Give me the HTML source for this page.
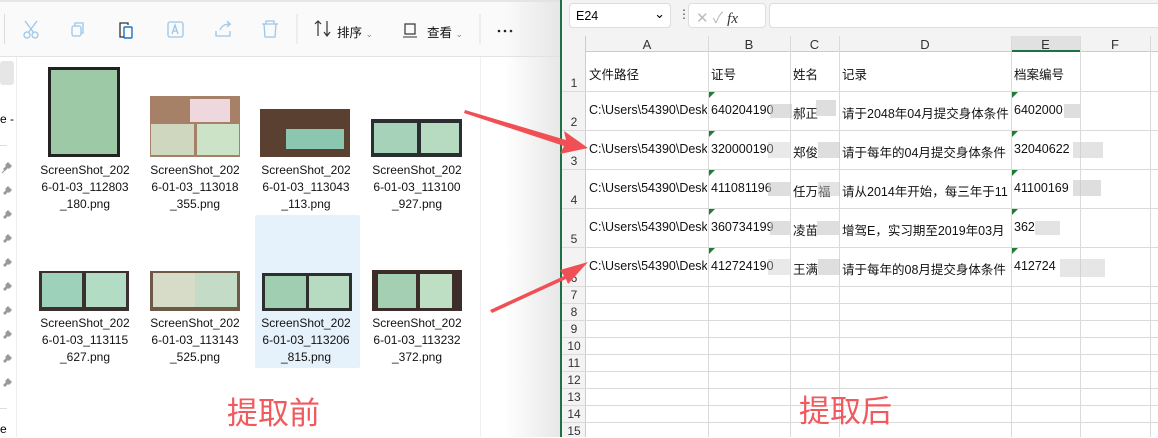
<!DOCTYPE html>
<html><head><meta charset="utf-8"><style>
*{margin:0;padding:0;box-sizing:border-box}
body{width:1158px;height:437px;overflow:hidden;background:#fff;position:relative;font-family:"Liberation Sans","Noto Sans CJK SC",sans-serif}
.a{position:absolute}
.tb{left:0;top:0;width:560px;height:57px;background:#fafafa;border-bottom:1px solid #e3e3e3}
.fn{font-size:12px;color:#111;text-align:center;line-height:17px;width:100px}
.rh{position:absolute;left:562px;width:24px;font-size:12px;color:#333;text-align:center}
.cell{position:absolute;font-size:12.5px;color:#111;white-space:nowrap;overflow:hidden}
.blur{position:absolute;background:#c8c8c8;opacity:.6}
.tri{position:absolute;width:0;height:0;border-top:6px solid #1e7d32;border-right:6px solid transparent}
.pn{position:absolute;left:1px;width:10px;height:10px}
</style></head><body>
<div class="a tb"></div>
<div class="a" style="left:0;top:0;width:560px;height:2px;background:#e6e6e6"></div>
<div class="a" style="left:4px;top:14px;width:1px;height:30px;background:#ddd"></div>
<svg class="a" style="left:0;top:0" width="560" height="57">
<g fill="none" stroke="#9cc7ea" stroke-width="1.3">
<circle cx="27" cy="35" r="3"/><circle cx="35" cy="35" r="3"/><path d="M25 21l9 12M37 21l-9 12"/>
<rect x="72" y="26" width="9" height="10" rx="2"/><path d="M75 26v-3h8v10h-2"/>
<rect x="168" y="22" width="15" height="15" rx="2"/><path d="M172 34l3-9 3 9M173 31h4"/>
<path d="M216 31v5h14v-5M220 30c2-5 6-6 10-6l-3-3M230 24l-3 3"/>
<path d="M262 24h16M266 24v-3h8v3M264 24l1 13h10l1-13"/>
</g>
<rect x="124" y="27" width="8" height="11" rx="1" fill="none" stroke="#1a73c7" stroke-width="1.4"/>
<path d="M128 25v-2h-8v14h4" fill="none" stroke="#333" stroke-width="1.3"/>
<line x1="297" y1="14" x2="297" y2="44" stroke="#e0e0e0"/>
<path d="M315 24l3-3 3 3M318 21v15M324 32l3 4 3-4M327 21v15" stroke="#333" fill="none" stroke-width="1.2"/>
<rect x="405" y="24" width="10" height="10" fill="none" stroke="#333" stroke-width="1.2"/><line x1="403" y1="37" x2="417" y2="37" stroke="#333"/>
<line x1="480" y1="14" x2="480" y2="44" stroke="#e0e0e0"/>
<circle cx="499" cy="31" r="1.3" fill="#222"/><circle cx="505" cy="31" r="1.3" fill="#222"/><circle cx="511" cy="31" r="1.3" fill="#222"/>
</svg>
<div class="a" style="left:337px;top:22px;font-size:12.5px;color:#111">排序 <span style="color:#888;font-size:9px">⌄</span></div>
<div class="a" style="left:427px;top:22px;font-size:12.5px;color:#111">查看 <span style="color:#888;font-size:9px">⌄</span></div>
<div class="a" style="left:0;top:61px;width:14px;height:24px;background:#e6e6e6;border-radius:3px"></div>
<div class="a" style="left:0;top:112px;font-size:12px">e -</div>
<div class="a" style="left:0;top:145px;width:7px;height:1px;background:#ddd"></div>
<div class="a" style="left:0;top:408px;width:7px;height:1px;background:#ddd"></div>
<div class="a" style="left:0;top:422px;font-size:12px">e</div>
<div class="a" style="left:16px;top:57px;width:1px;height:380px;background:#eee"></div>
<svg class="a" style="left:0;top:160px" width="14" height="240"><g fill="#999">
<path d="M3 9l3-3-1-1 3-3 4 4-3 3-1-1-3 3z M2 12l3-3"/>
<path transform="translate(0,24)" d="M3 9l3-3-1-1 3-3 4 4-3 3-1-1-3 3z"/>
<path transform="translate(0,48)" d="M3 9l3-3-1-1 3-3 4 4-3 3-1-1-3 3z"/>
<path transform="translate(0,72)" d="M3 9l3-3-1-1 3-3 4 4-3 3-1-1-3 3z"/>
<path transform="translate(0,96)" d="M3 9l3-3-1-1 3-3 4 4-3 3-1-1-3 3z"/>
<path transform="translate(0,120)" d="M3 9l3-3-1-1 3-3 4 4-3 3-1-1-3 3z"/>
<path transform="translate(0,144)" d="M3 9l3-3-1-1 3-3 4 4-3 3-1-1-3 3z"/>
<path transform="translate(0,168)" d="M3 9l3-3-1-1 3-3 4 4-3 3-1-1-3 3z"/>
<path transform="translate(0,192)" d="M3 9l3-3-1-1 3-3 4 4-3 3-1-1-3 3z"/>
<path transform="translate(0,216)" d="M3 9l3-3-1-1 3-3 4 4-3 3-1-1-3 3z"/>
</g><g stroke="#999"><line x1="2" y1="13" x2="5" y2="10"/></g></svg>
<div class="a" style="left:255px;top:215px;width:105px;height:153px;background:#e5f1fb;border-radius:2px"></div>
<!-- thumbs row1 -->
<div class="a" style="left:48px;top:67px;width:72px;height:90px;background:#9ec9a6;border:3px solid #222"></div>
<div class="a" style="left:150px;top:96px;width:90px;height:61px;background:#a78068"></div>
<div class="a" style="left:151px;top:124px;width:43px;height:31px;background:#cfd8bf"></div><div class="a" style="left:197px;top:124px;width:42px;height:31px;background:#cde3c8"></div>
<div class="a" style="left:190px;top:99px;width:40px;height:23px;background:#eed8dd"></div>
<div class="a" style="left:260px;top:109px;width:90px;height:48px;background:#5a4030"></div>
<div class="a" style="left:286px;top:129px;width:58px;height:20px;background:#8bc6b0"></div>
<div class="a" style="left:371px;top:119px;width:91px;height:38px;background:#2b2e30"></div>
<div class="a" style="left:374px;top:123px;width:43px;height:30px;background:#a5d2b8"></div><div class="a" style="left:421px;top:123px;width:38px;height:30px;background:#b7dbc0"></div>
<!-- thumbs row2 -->
<div class="a" style="left:39px;top:271px;width:90px;height:40px;background:#3a3030"></div>
<div class="a" style="left:42px;top:273px;width:40px;height:34px;background:#9dd1ba"></div><div class="a" style="left:86px;top:273px;width:40px;height:34px;background:#b2dcc4"></div>
<div class="a" style="left:150px;top:271px;width:90px;height:40px;background:#6e5a44"></div>
<div class="a" style="left:153px;top:273px;width:42px;height:34px;background:#d6dcc8"></div><div class="a" style="left:195px;top:273px;width:42px;height:34px;background:#c4dbc8"></div>
<div class="a" style="left:262px;top:273px;width:90px;height:38px;background:#2d2e2e"></div>
<div class="a" style="left:265px;top:276px;width:41px;height:32px;background:#9fceb1"></div><div class="a" style="left:309px;top:276px;width:40px;height:32px;background:#b6dbc0"></div>
<div class="a" style="left:372px;top:270px;width:90px;height:41px;background:#3c2c2a"></div>
<div class="a" style="left:378px;top:274px;width:38px;height:34px;background:#a5cfb2"></div><div class="a" style="left:420px;top:274px;width:32px;height:34px;background:#bfdfc5"></div>
<div class="a fn" style="left:35px;top:162px">ScreenShot_202<br>6-01-03_112803<br>_180.png</div>
<div class="a fn" style="left:145px;top:162px">ScreenShot_202<br>6-01-03_113018<br>_355.png</div>
<div class="a fn" style="left:256px;top:162px">ScreenShot_202<br>6-01-03_113043<br>_113.png</div>
<div class="a fn" style="left:367px;top:162px">ScreenShot_202<br>6-01-03_113100<br>_927.png</div>
<div class="a fn" style="left:35px;top:315px">ScreenShot_202<br>6-01-03_113115<br>_627.png</div>
<div class="a fn" style="left:145px;top:315px">ScreenShot_202<br>6-01-03_113143<br>_525.png</div>
<div class="a fn" style="left:256px;top:315px">ScreenShot_202<br>6-01-03_113206<br>_815.png</div>
<div class="a fn" style="left:367px;top:315px">ScreenShot_202<br>6-01-03_113232<br>_372.png</div>
<div class="a" style="left:480px;top:57px;width:1px;height:380px;background:#f0f0f0"></div>
<div class="a" style="left:505px;top:0;width:55px;height:437px;background:linear-gradient(90deg,rgba(255,255,255,0),rgba(225,225,225,.8))"></div>
<div class="a" style="left:227px;top:388px;font-size:31px;color:#f05a5e">提取前</div>
<!-- excel -->
<div class="a" style="left:560px;top:0;width:598px;height:36px;background:#f3f3f3"></div>
<div class="a" style="left:560px;top:0;width:2px;height:437px;background:#1e7145"></div>
<div class="a" style="left:569px;top:3px;width:102px;height:25px;background:#fff;border:1px solid #ddd;border-radius:4px;font-size:12.5px;padding:5px 0 0 6px">E24<span style="position:absolute;right:5px;top:2px;font-size:13px">⌄</span></div>
<div class="a" style="left:678px;top:7px;font-size:12px;color:#444">⋮</div>
<div class="a" style="left:688px;top:3px;width:78px;height:25px;background:#fff;border:1px solid #ddd;border-radius:4px;font-size:15px;color:#bbb;padding:3px 0 0 7px">✕ ✓ <i style="color:#333;font-family:'Liberation Serif',serif">fx</i></div>
<div class="a" style="left:769px;top:3px;width:395px;height:25px;background:#fff;border:1px solid #ddd;border-radius:4px"></div>
<div class="a" style="left:562px;top:36px;width:596px;height:16px;background:#f3f3f3;border-bottom:1px solid #ccc"></div>
<div class="a" style="left:562px;top:36px;width:24px;height:401px;background:#f3f3f3;border-right:1px solid #ccc"></div>
<div class="a" style="left:1011px;top:36px;width:69px;height:16px;background:#e1e1e1;border-bottom:2px solid #1e7145"></div>
<svg class="a" style="left:562px;top:36px" width="596" height="401">
<g stroke="#dadada" stroke-width="1">
<line x1="146.5" y1="0" x2="146.5" y2="401"/><line x1="228.5" y1="0" x2="228.5" y2="401"/><line x1="277.5" y1="0" x2="277.5" y2="401"/><line x1="449.5" y1="0" x2="449.5" y2="401"/><line x1="518.5" y1="0" x2="518.5" y2="401"/><line x1="588.5" y1="0" x2="588.5" y2="401"/>
<line x1="0" y1="55.5" x2="596" y2="55.5"/><line x1="0" y1="94.5" x2="596" y2="94.5"/><line x1="0" y1="133.5" x2="596" y2="133.5"/><line x1="0" y1="172.5" x2="596" y2="172.5"/><line x1="0" y1="211.5" x2="596" y2="211.5"/><line x1="0" y1="250.5" x2="596" y2="250.5"/>
<line x1="0" y1="267.5" x2="596" y2="267.5"/><line x1="0" y1="284.5" x2="596" y2="284.5"/><line x1="0" y1="301.5" x2="596" y2="301.5"/><line x1="0" y1="318.5" x2="596" y2="318.5"/><line x1="0" y1="335.5" x2="596" y2="335.5"/><line x1="0" y1="352.5" x2="596" y2="352.5"/><line x1="0" y1="369.5" x2="596" y2="369.5"/><line x1="0" y1="386.5" x2="596" y2="386.5"/>
</g></svg>
<div class="a" style="top:37px;left:586px;width:122px;text-align:center;font-size:13px;color:#333">A</div>
<div class="a" style="top:37px;left:708px;width:82px;text-align:center;font-size:13px;color:#333">B</div>
<div class="a" style="top:37px;left:790px;width:49px;text-align:center;font-size:13px;color:#333">C</div>
<div class="a" style="top:37px;left:839px;width:172px;text-align:center;font-size:13px;color:#333">D</div>
<div class="a" style="top:37px;left:1011px;width:69px;text-align:center;font-size:13px;color:#333">E</div>
<div class="a" style="top:37px;left:1080px;width:70px;text-align:center;font-size:13px;color:#333">F</div>
<div class="rh" style="top:76px">1</div><div class="rh" style="top:115px">2</div><div class="rh" style="top:154px">3</div><div class="rh" style="top:193px">4</div><div class="rh" style="top:232px">5</div><div class="rh" style="top:271px">6</div>
<div class="rh" style="top:288px">7</div><div class="rh" style="top:305px">8</div><div class="rh" style="top:322px">9</div><div class="rh" style="top:339px">10</div><div class="rh" style="top:356px">11</div><div class="rh" style="top:373px">12</div><div class="rh" style="top:390px">13</div><div class="rh" style="top:407px">14</div><div class="rh" style="top:424px">15</div>
<div class="cell" style="left:589px;top:64px">文件路径</div><div class="cell" style="left:711px;top:64px">证号</div><div class="cell" style="left:793px;top:64px">姓名</div><div class="cell" style="left:842px;top:64px">记录</div><div class="cell" style="left:1014px;top:64px">档案编号</div>
<div class="cell" style="left:589px;top:103px;width:118px">C:\Users\54390\Desktop</div><div class="cell" style="left:711px;top:103px;width:78px">640204190</div><div class="cell" style="left:793px;top:103px;width:45px">郝正</div><div class="cell" style="left:842px;top:103px;width:168px">请于2048年04月提交身体条件</div><div class="cell" style="left:1014px;top:103px;width:50px">6402000</div>
<div class="cell" style="left:589px;top:142px;width:118px">C:\Users\54390\Desktop</div><div class="cell" style="left:711px;top:142px;width:78px">320000190</div><div class="cell" style="left:793px;top:142px;width:45px">郑俊</div><div class="cell" style="left:842px;top:142px;width:168px">请于每年的04月提交身体条件</div><div class="cell" style="left:1014px;top:142px;width:60px">32040622</div>
<div class="cell" style="left:589px;top:181px;width:118px">C:\Users\54390\Desktop</div><div class="cell" style="left:711px;top:181px;width:78px">411081196</div><div class="cell" style="left:793px;top:181px;width:45px">任万福</div><div class="cell" style="left:842px;top:181px;width:168px">请从2014年开始，每三年于11</div><div class="cell" style="left:1014px;top:181px;width:60px">41100169</div>
<div class="cell" style="left:589px;top:220px;width:118px">C:\Users\54390\Desktop</div><div class="cell" style="left:711px;top:220px;width:78px">360734199</div><div class="cell" style="left:793px;top:220px;width:45px">凌苗</div><div class="cell" style="left:842px;top:220px;width:168px">增驾E，实习期至2019年03月</div><div class="cell" style="left:1014px;top:220px;width:30px">362</div>
<div class="cell" style="left:589px;top:259px;width:118px">C:\Users\54390\Desktop</div><div class="cell" style="left:711px;top:259px;width:78px">412724190</div><div class="cell" style="left:793px;top:259px;width:45px">王满</div><div class="cell" style="left:842px;top:259px;width:168px">请于每年的08月提交身体条件</div><div class="cell" style="left:1014px;top:259px;width:50px">412724</div>
<div class="blur" style="left:770px;top:104px;width:22px;height:14px"></div><div class="blur" style="left:816px;top:100px;width:20px;height:16px"></div><div class="blur" style="left:1064px;top:104px;width:16px;height:14px"></div>
<div class="blur" style="left:768px;top:142px;width:22px;height:16px;opacity:.4"></div><div class="blur" style="left:818px;top:142px;width:22px;height:16px"></div><div class="blur" style="left:1073px;top:142px;width:30px;height:16px;opacity:.5"></div>
<div class="blur" style="left:768px;top:182px;width:22px;height:14px"></div><div class="blur" style="left:818px;top:182px;width:22px;height:14px;opacity:.5"></div><div class="blur" style="left:1073px;top:180px;width:28px;height:16px;opacity:.6"></div>
<div class="blur" style="left:770px;top:221px;width:20px;height:14px"></div><div class="blur" style="left:817px;top:221px;width:22px;height:14px"></div><div class="blur" style="left:1035px;top:221px;width:25px;height:14px;opacity:.5"></div>
<div class="blur" style="left:768px;top:259px;width:22px;height:16px;opacity:.4"></div><div class="blur" style="left:818px;top:259px;width:22px;height:16px"></div><div class="blur" style="left:1060px;top:259px;width:45px;height:18px;opacity:.45"></div>
<div class="tri" style="left:709px;top:92px"></div><div class="tri" style="left:1012px;top:92px"></div>
<div class="tri" style="left:709px;top:131px"></div><div class="tri" style="left:1012px;top:131px"></div>
<div class="tri" style="left:709px;top:170px"></div><div class="tri" style="left:1012px;top:170px"></div>
<div class="tri" style="left:709px;top:209px"></div><div class="tri" style="left:1012px;top:209px"></div>
<div class="tri" style="left:709px;top:248px"></div><div class="tri" style="left:1012px;top:248px"></div>
<div class="a" style="left:799px;top:386px;font-size:31px;color:#f05a5e">提取后</div>
<svg class="a" style="left:0;top:0" width="1158" height="437">
<path d="M465 110L566 140L564 131L588 148L560 154L564 146L464 113Z" fill="#f05055"/>
<path d="M490 310L564 276L560 270L588 262L568 284L566 279L492 313Z" fill="#f05055"/>
</svg>
</body></html>
